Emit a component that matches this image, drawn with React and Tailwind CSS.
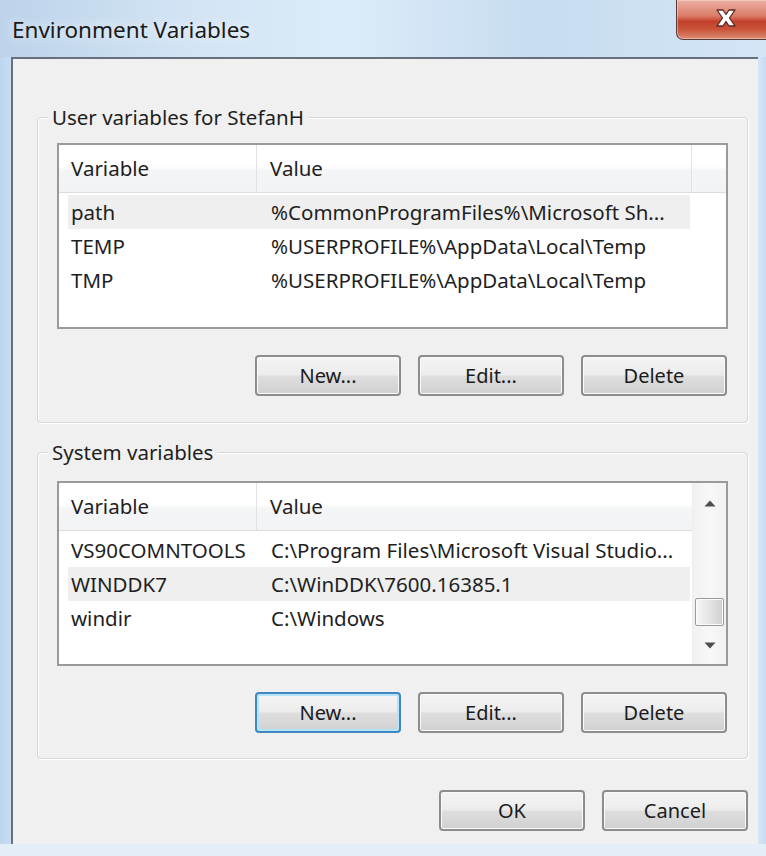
import React from "react";

const userVars = [
  { name: "path", value: "%CommonProgramFiles%\\Microsoft Sh...", hot: true },
  { name: "TEMP", value: "%USERPROFILE%\\AppData\\Local\\Temp" },
  { name: "TMP", value: "%USERPROFILE%\\AppData\\Local\\Temp" },
];

const systemVars = [
  { name: "VS90COMNTOOLS", value: "C:\\Program Files\\Microsoft Visual Studio..." },
  { name: "WINDDK7", value: "C:\\WinDDK\\7600.16385.1", hot: true },
  { name: "windir", value: "C:\\Windows" },
];

function Button({ children, focused = false }) {
  return (
    <button
      className={
        "w-[146px] h-[41px] rounded-[4px] border-2 text-[20px] text-[#1b1b1b] leading-none " +
        "bg-[linear-gradient(#f4f4f4_0%,#ececec_48%,#dedede_52%,#d0d0d0_100%)] " +
        (focused
          ? "border-[#3f88c0] shadow-[inset_0_0_0_2px_#b4e4f7]"
          : "border-[#8d8d8d] shadow-[inset_0_0_0_1px_#fafafa]")
      }
    >
      {children}
    </button>
  );
}

function Header({ filler = true }) {
  return (
    <div className="flex h-[48px] shrink-0 border-b border-[#dcdcdc] bg-[linear-gradient(#ffffff_0%,#ffffff_45%,#f4f5f6_55%,#f2f3f4_100%)] text-[20.5px] text-[#1e1e1e]">
      <div className="w-[198px] border-r border-[#e2e2e2] pl-[12px] flex items-center">Variable</div>
      <div className={"w-[435px] pl-[13px] flex items-center " + (filler ? "border-r border-[#e2e2e2]" : "")}>
        Value
      </div>
      {filler && <div className="flex-1" />}
    </div>
  );
}

function Rows({ items }) {
  return (
    <div className="pt-[2px] text-[20.5px] text-[#1e1e1e]">
      {items.map((r) => (
        <div key={r.name} className="h-[34px] pl-[9px] flex">
          <div className={"w-[622px] flex items-center " + (r.hot ? "bg-[#efefef]" : "")}>
            <div className="w-[200px] pl-[3px] whitespace-nowrap">{r.name}</div>
            <div className="pl-[3px] whitespace-nowrap">{r.value}</div>
          </div>
        </div>
      ))}
    </div>
  );
}

function Scrollbar() {
  return (
    <div className="w-[34px] shrink-0 flex flex-col items-center bg-[linear-gradient(90deg,#f1f1f1,#f8f8f8_50%,#f1f1f1)] border-l border-[#ececec]">
      <div className="h-[40px] w-full flex items-center justify-center">
        <svg width="12" height="7" viewBox="0 0 12 7">
          <path d="M6 0.5 L11.5 6.5 L0.5 6.5 Z" fill="#4d4d4d" />
        </svg>
      </div>
      <div className="flex-1 w-full flex flex-col justify-end items-center">
        <div className="w-[29px] h-[28px] rounded-[2px] border border-[#9a9a9a] bg-[linear-gradient(90deg,#f7f7f7_0%,#e6e6e6_45%,#cfcfcf_100%)] shadow-[inset_0_0_0_1px_#fbfbfb]" />
      </div>
      <div className="h-[38px] w-full flex items-center justify-center">
        <svg width="12" height="7" viewBox="0 0 12 7">
          <path d="M0.5 0.5 L11.5 0.5 L6 6.5 Z" fill="#4d4d4d" />
        </svg>
      </div>
    </div>
  );
}

function Group({ title, children, className = "" }) {
  return (
    <fieldset
      className={
        "border border-[#d6d6d6] rounded-[4px] shadow-[inset_1px_1px_0_#ffffff,1px_1px_0_#ffffff] px-[19px] " +
        className
      }
    >
      <legend className="ml-[-9px] px-[4px] bg-[#f0f0f0] text-[20.5px] leading-[26px] text-[#1e1e1e]">{title}</legend>
      {children}
    </fieldset>
  );
}

export default function App() {
  return (
    <div className="w-[766px] h-[856px] overflow-hidden flex flex-col bg-[#cfe1f3] font-['Noto_Sans','Open_Sans',sans-serif]">
      {/* caption bar */}
      <div className="h-[57px] shrink-0 flex items-start bg-[linear-gradient(90deg,#bcd3ea_0%,#d3e4f5_25%,#dcebf8_45%,#c7dcf1_70%,#d4e5f6_100%)]">
        <div className="pl-[12px] pt-[16px] text-[22.5px] leading-[28px] text-[#1a1a1a] [text-shadow:0_0_12px_#ffffff]">
          Environment Variables
        </div>
        <div className="flex-1" />
        <div className="w-[92px] h-[40px] mr-[-2px] rounded-bl-[7px] border border-t-0 border-[#5a3a36] bg-[linear-gradient(#eab0a3_0%,#dc7e69_40%,#c2402a_55%,#c95338_75%,#dc8d74_100%)] shadow-[inset_0_0_0_1px_rgba(255,220,210,0.5)] flex items-center justify-center">
          <svg width="24" height="20" viewBox="0 0 24 20" className="ml-[8px] mt-[-4px]">
            <path
              d="M3 2 L9 2 L12 6.5 L15 2 L21 2 L15.5 10 L21 18 L15 18 L12 13.5 L9 18 L3 18 L8.5 10 Z"
              fill="#ffffff"
              stroke="#5b2a22"
              strokeWidth="1.3"
              strokeLinejoin="round"
            />
          </svg>
        </div>
      </div>

      <div className="flex-1 flex min-h-0">
        {/* left frame */}
        <div className="w-[11px] shrink-0 bg-[linear-gradient(90deg,#bcd5ef,#c9ddf2)]" />
        {/* client area */}
        <div className="w-[747px] shrink-0 border-l-2 border-t-2 border-[#66717d] bg-[#f0f0f0] pl-[24px] pr-[10px] flex flex-col">
          <Group title="User variables for StefanH" className="mt-[45px] pt-[13px] pb-[26px]">
            <div className="h-[186px] border-2 border-[#9a9a9a] bg-white flex flex-col">
              <Header />
              <Rows items={userVars} />
            </div>
            <div className="mt-[26px] flex justify-end gap-[17px] pr-[1px]">
              <Button>New...</Button>
              <Button>Edit...</Button>
              <Button>Delete</Button>
            </div>
          </Group>

          <Group title="System variables" className="mt-[16px] pt-[16px] pb-[25px]">
            <div className="h-[185px] border-2 border-[#9a9a9a] bg-white flex">
              <div className="flex-1 flex flex-col">
                <Header filler={false} />
                <Rows items={systemVars} />
              </div>
              <Scrollbar />
            </div>
            <div className="mt-[26px] flex justify-end gap-[17px] pr-[1px]">
              <Button focused>New...</Button>
              <Button>Edit...</Button>
              <Button>Delete</Button>
            </div>
          </Group>

          <div className="mt-[31px] flex justify-end gap-[17px]">
            <Button>OK</Button>
            <Button>Cancel</Button>
          </div>
        </div>
        {/* right frame */}
        <div className="flex-1 bg-[linear-gradient(90deg,#d6e6f6,#c6dbf0)]" />
      </div>
      {/* bottom frame */}
      <div className="h-[12px] shrink-0 bg-[#e4eef8]" />
    </div>
  );
}
